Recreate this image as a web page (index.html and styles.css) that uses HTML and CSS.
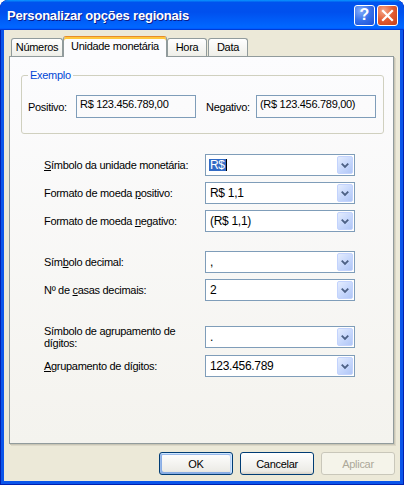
FILE: index.html
```html
<!DOCTYPE html>
<html lang="pt-BR">

<head>
    <meta charset="UTF-8">
    <title>Personalizar opções regionais</title>
    <link rel="stylesheet" href="styles.css">
</head>

<body>
    <div class="window">
        <div class="titlebar">
            <span class="title">Personalizar opções regionais</span>
            <div class="title-controls">
                <button class="tb-btn help">?</button>
                <button class="tb-btn close">
                    <svg width="19" height="19" viewBox="0 0 19 19">
                        <path d="M5 5 L14 14 M14 5 L5 14" stroke="#fff" stroke-width="2.2" stroke-linecap="square" />
                    </svg>
                </button>
            </div>
        </div>

        <div class="client">
            <div class="tabs">
                <div class="tab tab-num">Números</div>
                <div class="tab tab-active">Unidade monetária</div>
                <div class="tab tab-hora">Hora</div>
                <div class="tab tab-data">Data</div>
            </div>

            <div class="panel">
                <fieldset class="group">
                    <legend>Exemplo</legend>
                    <div class="sample-row">
                        <span class="sample-label">Positivo:</span>
                        <div class="sample-box">R$ 123.456.789,00</div>
                        <span class="sample-label neg">Negativo:</span>
                        <div class="sample-box">(R$ 123.456.789,00)</div>
                    </div>
                </fieldset>

                <div class="section first">
                    <div class="row">
                        <label class="label"><u>S</u>ímbolo da unidade monetária:</label>
                        <div class="combo">
                            <span class="value"><span class="sel">R$</span><span class="caret"></span></span>
                            <span class="drop"><svg width="15" height="16" viewBox="0 0 15 16"><path d="M4 6.5 L7.5 10 L11 6.5" fill="none" stroke="#4d6185" stroke-width="2" /></svg></span>
                        </div>
                    </div>
                    <div class="row">
                        <label class="label">Formato de moeda <u>p</u>ositivo:</label>
                        <div class="combo">
                            <span class="value">R$ 1,1</span>
                            <span class="drop"><svg width="15" height="16" viewBox="0 0 15 16"><path d="M4 6.5 L7.5 10 L11 6.5" fill="none" stroke="#4d6185" stroke-width="2" /></svg></span>
                        </div>
                    </div>
                    <div class="row">
                        <label class="label">Formato de moeda <u>n</u>egativo:</label>
                        <div class="combo">
                            <span class="value">(R$ 1,1)</span>
                            <span class="drop"><svg width="15" height="16" viewBox="0 0 15 16"><path d="M4 6.5 L7.5 10 L11 6.5" fill="none" stroke="#4d6185" stroke-width="2" /></svg></span>
                        </div>
                    </div>
                </div>

                <div class="section second">
                    <div class="row">
                        <label class="label">Sím<u>b</u>olo decimal:</label>
                        <div class="combo">
                            <span class="value">,</span>
                            <span class="drop"><svg width="15" height="16" viewBox="0 0 15 16"><path d="M4 6.5 L7.5 10 L11 6.5" fill="none" stroke="#4d6185" stroke-width="2" /></svg></span>
                        </div>
                    </div>
                    <div class="row">
                        <label class="label">Nº de <u>c</u>asas decimais:</label>
                        <div class="combo">
                            <span class="value">2</span>
                            <span class="drop"><svg width="15" height="16" viewBox="0 0 15 16"><path d="M4 6.5 L7.5 10 L11 6.5" fill="none" stroke="#4d6185" stroke-width="2" /></svg></span>
                        </div>
                    </div>
                </div>

                <div class="section third">
                    <div class="row">
                        <label class="label">Símbolo de agrupamento de dígitos:</label>
                        <div class="combo">
                            <span class="value">.</span>
                            <span class="drop"><svg width="15" height="16" viewBox="0 0 15 16"><path d="M4 6.5 L7.5 10 L11 6.5" fill="none" stroke="#4d6185" stroke-width="2" /></svg></span>
                        </div>
                    </div>
                    <div class="row">
                        <label class="label"><u>A</u>grupamento de dígitos:</label>
                        <div class="combo">
                            <span class="value">123.456.789</span>
                            <span class="drop"><svg width="15" height="16" viewBox="0 0 15 16"><path d="M4 6.5 L7.5 10 L11 6.5" fill="none" stroke="#4d6185" stroke-width="2" /></svg></span>
                        </div>
                    </div>
                </div>
            </div>

            <div class="actions">
                <button class="btn default">OK</button>
                <button class="btn">Cancelar</button>
                <button class="btn" disabled>Aplicar</button>
            </div>
        </div>
    </div>
</body>

</html>
```

FILE: styles.css
```css
* {
    box-sizing: border-box;
}

body {
    margin: 0;
    background: #fff;
    font-family: "Liberation Sans", Arial, sans-serif;
    font-size: 11px;
    letter-spacing: -0.3px;
    color: #000;
}

.window {
    width: 404px;
    height: 485px;
    display: flex;
    flex-direction: column;
    background: #0b55ea;
    border-radius: 8px 8px 0 0;
    box-shadow: inset 1px 0 #0020b0, inset -1px 0 #0020b0, inset 0 -1px #0020b0;
    overflow: hidden;
}

/* title bar */
.titlebar {
    flex: none;
    height: 30px;
    display: flex;
    align-items: center;
    padding: 0 6px 0 7px;
    background: linear-gradient(180deg, #0997ff, #0053ee 8%, #0050ee 40%, #06f 88%, #06f 93%, #005bff 95%, #003dd7 96%, #003dd7);
    border-radius: 8px 8px 0 0;
}

.title {
    padding-top: 1px;
    color: #fff;
    font-size: 13px;
    font-weight: bold;
    letter-spacing: -0.2px;
    text-shadow: 1px 1px #0a1c8c;
}

.title-controls {
    margin-left: auto;
    display: flex;
    gap: 2px;
}

.tb-btn {
    width: 21px;
    height: 21px;
    padding: 0;
    border: 1px solid #fff;
    border-radius: 3px;
    display: flex;
    align-items: center;
    justify-content: center;
    color: #fff;
    font-family: "Liberation Sans", Arial, sans-serif;
    font-size: 16px;
    font-weight: bold;
}

.help {
    background: radial-gradient(circle at 30% 25%, #86adfa, #3670ea 50%, #1b4fd6);
}

.close {
    background: radial-gradient(circle at 30% 25%, #f5a789, #e35a30 50%, #c53f17);
}

/* client area */
.client {
    flex: 1;
    margin: 0 4px 4px;
    padding: 6px 0 0 5px;
    background: #ece9d8;
}

.tabs {
    height: 20px;
    display: flex;
    align-items: flex-end;
    padding-left: 2px;
    position: relative;
    z-index: 1;
}

.tab {
    height: 18px;
    line-height: 17px;
    text-align: center;
    border: 1px solid #919b9c;
    border-bottom: none;
    border-radius: 3px 3px 0 0;
    background: linear-gradient(180deg, #fff, #fafaf9 26%, #f0f0ea 95%, #ecebe5);
}

.tab-num {
    width: 52px;
}

.tab-active {
    width: 104px;
    height: 21px;
    line-height: 18px;
    margin-bottom: -1px;
    border-top-color: #e68b2c;
    background: #fcfcfe;
    box-shadow: inset 0 2px #ffc73c;
}

.tab-hora {
    width: 40px;
    margin-right: 1px;
}

.tab-data {
    width: 40px;
}

.panel {
    width: 385px;
    height: 388px;
    border: 1px solid #919b9c;
    background: linear-gradient(180deg, #fcfcfe, #f4f3ee);
    box-shadow: 1px 1px 0 #c9c6b6, 2px 2px 0 #dcd8c8;
}

/* Exemplo group */
.group {
    width: 363px;
    margin: 12px 0 0 11px;
    padding: 13px 0 15px 6px;
    border: 1px solid #d0d0bf;
    border-radius: 3px;
}

.group legend {
    padding: 0 2px;
    line-height: 13px;
    color: #0046d5;
}

.sample-row {
    height: 23px;
    display: flex;
    align-items: center;
}

.sample-label {
    width: 48px;
    padding-top: 1px;
}

.sample-label.neg {
    width: 50px;
    margin-left: 10px;
}

.sample-box {
    width: 120px;
    height: 23px;
    padding: 2px 3px;
    line-height: 13px;
    border: 1px solid #7f9db9;
    white-space: nowrap;
}

/* combo rows */
.section {
    margin-left: 34px;
    display: flex;
    flex-direction: column;
    gap: 6px;
}

.section.first {
    margin-top: 20px;
}

.section.second {
    margin-top: 19px;
}

.section.third {
    margin-top: 24px;
}

.row {
    display: flex;
    align-items: center;
}

.label {
    width: 155px;
    margin-right: 6px;
    line-height: 12px;
}

.combo {
    width: 150px;
    height: 22px;
    display: flex;
    align-items: center;
    border: 1px solid #7f9db9;
    background: #fff;
}

.value {
    flex: 1;
    display: flex;
    align-items: center;
    padding-left: 4px;
    font-size: 12px;
}

.sel {
    margin-left: -1px;
    padding: 0 1px;
    background: #316ac5;
    color: #fff;
    line-height: 12px;
}

.caret {
    width: 1px;
    height: 12px;
    background: #000;
}

.drop {
    width: 16px;
    height: 18px;
    margin: 1px;
    display: flex;
    align-items: center;
    justify-content: center;
    border: 1px solid #c3d3fd;
    border-radius: 2px;
    background: linear-gradient(135deg, #e4ecfd, #c6d7fc 55%, #b0c6f6);
}

/* dialog buttons */
.actions {
    margin-top: 8px;
    padding-right: 5px;
    display: flex;
    justify-content: flex-end;
    gap: 7px;
}

.btn {
    width: 74px;
    height: 23px;
    padding: 0;
    border: 1px solid #003c74;
    border-radius: 3px;
    background: linear-gradient(180deg, #fff, #ecebe6 86%, #d6d0c5);
    font-family: "Liberation Sans", Arial, sans-serif;
    font-size: 11px;
    letter-spacing: -0.3px;
    color: #000;
}

.btn.default {
    box-shadow: inset -1px 1px #cee7ff, inset 1px 2px #98b8ea, inset -2px 2px #bcd4f6, inset 1px -1px #89ade4, inset 2px -2px #89ade4;
}

.btn:disabled {
    border-color: #c9c7ba;
    background: #f5f4ea;
    color: #aca899;
}
```
